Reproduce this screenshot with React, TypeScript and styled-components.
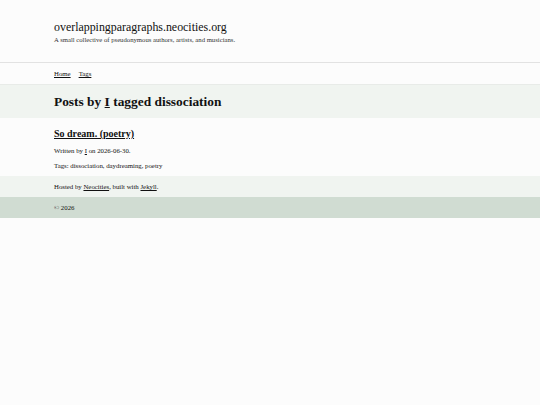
import React from "react";
import styled, { createGlobalStyle } from "styled-components";

const Global = createGlobalStyle`
  html, body { margin: 0; padding: 0; background: #fcfcfc; }
  body { font-family: "Liberation Serif", "Times New Roman", serif; color: #111; }
`;

const Header = styled.header`
  padding: 20px 54px 0;
  height: 63px;
  box-sizing: border-box;
  border-bottom: 1px solid #e2e2e2;
`;

const SiteTitle = styled.div`
  font-size: 11.9px;
  line-height: 15px;
  color: #111;
`;

const Tagline = styled.div`
  font-size: 6.7px;
  line-height: 9px;
  color: #333;
`;

const Nav = styled.nav`
  display: flex;
  gap: 8px;
  align-items: center;
  padding: 0 54px;
  height: 21px;
  border-bottom: 1px solid #e8ebe8;
  font-size: 6.8px;
`;

const Link = styled.a`
  color: #111;
  text-decoration: underline;
`;

const Band = styled.section<{ $bg: string; $h: number }>`
  background: ${(p) => p.$bg};
  height: ${(p) => p.$h}px;
  box-sizing: border-box;
  padding: 0 54px;
  display: flex;
  flex-direction: column;
  justify-content: center;
`;

const Heading = styled.h1`
  margin: 0;
  font-size: 13.4px;
  line-height: 16px;
  padding-top: 1px;
  font-weight: bold;
`;

const Post = styled.article`
  padding: 10px 54px 0;
  height: 58px;
  box-sizing: border-box;
`;

const PostTitle = styled.h2`
  margin: 0 0 7px;
  font-size: 10px;
  line-height: 12px;
  font-weight: bold;
  a { color: #111; }
`;

const Meta = styled.p`
  margin: 0 0 7px;
  font-size: 6.8px;
  line-height: 8px;
`;

const Small = styled.div`
  font-size: 6.8px;
`;

export default function App() {
  return (
    <>
      <Global />
      <Header>
        <SiteTitle>overlappingparagraphs.neocities.org</SiteTitle>
        <Tagline>A small collective of pseudonymous authors, artists, and musicians.</Tagline>
      </Header>
      <Nav>
        <Link href="#">Home</Link>
        <Link href="#">Tags</Link>
      </Nav>
      <Band $bg="#f0f4f0" $h={33}>
        <Heading>
          Posts by <Link href="#">I</Link> tagged dissociation
        </Heading>
      </Band>
      <Post>
        <PostTitle>
          <a href="#">So dream. (poetry)</a>
        </PostTitle>
        <Meta>
          Written by <Link href="#">I</Link> on 2026-06-30.
        </Meta>
        <Meta>Tags: dissociation, daydreaming, poetry</Meta>
      </Post>
      <Band $bg="#f0f4f0" $h={21}>
        <Small>
          Hosted by <Link href="#">Neocities</Link>, built with <Link href="#">Jekyll</Link>.
        </Small>
      </Band>
      <Band $bg="#d0dcd2" $h={21}>
        <Small>© 2026</Small>
      </Band>
    </>
  );
}
